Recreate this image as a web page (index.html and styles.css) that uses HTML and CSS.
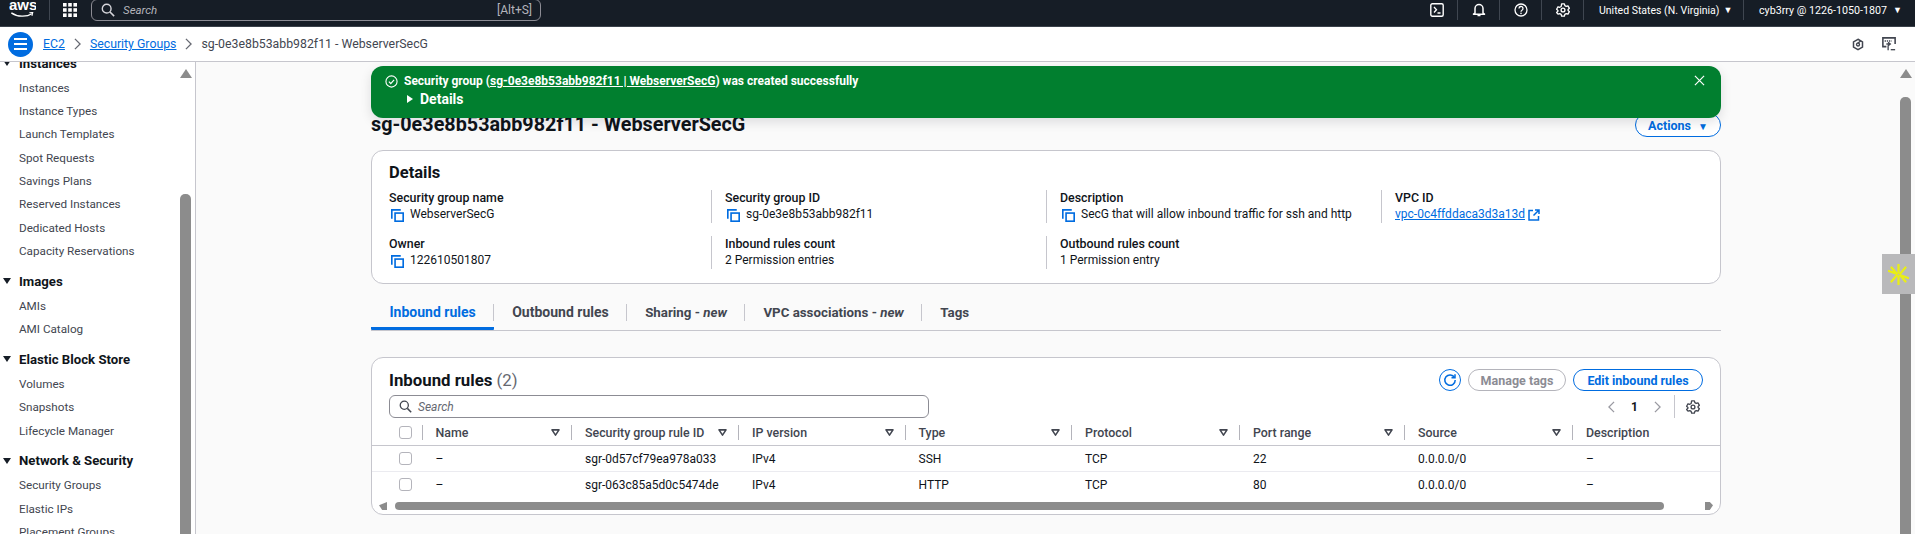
FILE: index.html
```html
<!DOCTYPE html>
<html lang="en">
<head>
  <meta charset="UTF-8">
  <title>Security Groups | EC2</title>
  <link rel="stylesheet" href="styles.css">
</head>
<body>

<svg class="sprite" xmlns="http://www.w3.org/2000/svg">
  <symbol id="i-copy" viewBox="0 0 16 16"><path d="M1 12V1h11" fill="none" stroke="currentColor" stroke-width="2"/><rect x="5" y="5" width="10" height="10" fill="none" stroke="currentColor" stroke-width="2"/></symbol>
  <symbol id="i-search" viewBox="0 0 16 16"><circle cx="6.5" cy="6.5" r="5" fill="none" stroke="currentColor" stroke-width="1.6"/><path d="M10.3 10.3 15 15" stroke="currentColor" stroke-width="1.8"/></symbol>
  <symbol id="i-gear" viewBox="0 0 16 16"><path d="M6.4 1h3.2l.5 2 1.6.9 2-.6 1.6 2.8-1.5 1.4v1l1.5 1.4-1.6 2.8-2-.6-1.6.9-.5 2H6.4l-.5-2-1.6-.9-2 .6L.7 10.9l1.5-1.4v-1L.7 7.1l1.6-2.8 2 .6 1.6-.9z" fill="none" stroke="currentColor" stroke-width="1.5" stroke-linejoin="round"/><circle cx="8" cy="8" r="2.2" fill="none" stroke="currentColor" stroke-width="1.5"/></symbol>
  <symbol id="i-sort" viewBox="0 0 10 8"><path d="M1 1h8L5 7z" fill="none" stroke="currentColor" stroke-width="1.8" stroke-linejoin="round"/></symbol>
  <symbol id="i-chev" viewBox="0 0 8 14"><path d="M1 1l6 6-6 6" fill="none" stroke="currentColor" stroke-width="1.5"/></symbol>
</svg>

<header class="topbar">
  <div class="aws-logo">
    <span class="aws-word">aws</span>
    <svg class="aws-smile" viewBox="0 0 28 7"><path d="M1 1c7 5 18 5 24 1" fill="none" stroke="#fff" stroke-width="1.5"/><path d="M22 1l4-.5-1 4" fill="none" stroke="#fff" stroke-width="1.2"/></svg>
  </div>
  <span class="top-divider"></span>
  <svg class="grid-icon" viewBox="0 0 14 14" fill="#fff"><rect width="3.6" height="3.6"/><rect x="5.2" width="3.6" height="3.6"/><rect x="10.4" width="3.6" height="3.6"/><rect y="5.2" width="3.6" height="3.6"/><rect x="5.2" y="5.2" width="3.6" height="3.6"/><rect x="10.4" y="5.2" width="3.6" height="3.6"/><rect y="10.4" width="3.6" height="3.6"/><rect x="5.2" y="10.4" width="3.6" height="3.6"/><rect x="10.4" y="10.4" width="3.6" height="3.6"/></svg>
  <div class="top-search">
    <svg class="icon-14"><use href="#i-search"/></svg>
    <span class="top-search-text">Search</span>
    <span class="top-search-key">[Alt+S]</span>
  </div>
  <div class="top-right">
    <div class="top-cell">
      <svg class="icon-14" viewBox="0 0 14 14"><rect x=".8" y=".8" width="12.4" height="12.4" rx="1.5" fill="none" stroke="#fff" stroke-width="1.4"/><path d="M4 4l2.5 2.8L4 9.5M7.5 10h3" fill="none" stroke="#fff" stroke-width="1.3"/></svg>
    </div>
    <div class="top-cell">
      <svg class="icon-14" viewBox="0 0 14 14"><path d="M3 10V5.500a4 4 0 0 1 8 0V10l1.500 1.200h-11z" fill="none" stroke="#fff" stroke-width="1.5" stroke-linejoin="round"/><path d="M5.5 12.5h3" stroke="#fff" stroke-width="1.5"/></svg>
    </div>
    <div class="top-cell">
      <svg class="icon-14" viewBox="0 0 14 14"><circle cx="7" cy="7" r="6" fill="none" stroke="#fff" stroke-width="1.3"/><path d="M5 5.500a2 2 0 1 1 3 1.700c-.7.4-1 .8-1 1.500" fill="none" stroke="#fff" stroke-width="1.3"/><rect x="6.3" y="9.7" width="1.4" height="1.4" fill="#fff"/></svg>
    </div>
    <div class="top-cell">
      <svg class="icon-14"><use href="#i-gear"/></svg>
    </div>
    <div class="top-cell top-region">United States (N. Virginia)<span class="caret">▼</span></div>
    <div class="top-cell top-user">cyb3rry @ 1226-1050-1807<span class="caret">▼</span></div>
  </div>
</header>

<div class="crumbbar">
  <button class="burger"><span></span><span></span><span></span></button>
  <a class="crumb-link crumb-first">EC2</a>
  <svg class="crumb-chev"><use href="#i-chev"/></svg>
  <a class="crumb-link">Security Groups</a>
  <svg class="crumb-chev"><use href="#i-chev"/></svg>
  <span class="crumb-now">sg-0e3e8b53abb982f11 - WebserverSecG</span>
  <div class="crumb-tools">
    <svg class="tool-hex" viewBox="0 0 16 16"><path d="M8 1l6 3.500v7L8 15l-6-3.500v-7z" fill="none" stroke="#424650" stroke-width="2"/><circle cx="8" cy="8" r="2" fill="none" stroke="#424650" stroke-width="1.8"/><path d="M8 6l4-3" stroke="#424650" stroke-width="1.8"/></svg>
    <svg class="tool-screen" viewBox="0 0 16 16"><path d="M5 11H1V1h14v7" fill="none" stroke="#424650" stroke-width="1.8"/><path d="M3 4.5h8" stroke="#424650" stroke-width="1.6" stroke-dasharray="1.5 1"/><path d="M5 8h4M7 6l2.500 2L7 10v5" fill="none" stroke="#424650" stroke-width="1.5"/><path d="M10 14.5h5" stroke="#424650" stroke-width="1.5"/></svg>
  </div>
</div>

<div class="layout">
  <nav class="sidenav">
    <div class="nav-list">
      <div class="nav-section nav-first">
        <div class="nav-head"><span class="nav-tri"></span>Instances</div>
        <a class="nav-item">Instances</a>
        <a class="nav-item">Instance Types</a>
        <a class="nav-item">Launch Templates</a>
        <a class="nav-item">Spot Requests</a>
        <a class="nav-item">Savings Plans</a>
        <a class="nav-item">Reserved Instances</a>
        <a class="nav-item">Dedicated Hosts</a>
        <a class="nav-item">Capacity Reservations</a>
      </div>
      <div class="nav-section">
        <div class="nav-head"><span class="nav-tri"></span>Images</div>
        <a class="nav-item">AMIs</a>
        <a class="nav-item">AMI Catalog</a>
      </div>
      <div class="nav-section">
        <div class="nav-head"><span class="nav-tri"></span>Elastic Block Store</div>
        <a class="nav-item">Volumes</a>
        <a class="nav-item">Snapshots</a>
        <a class="nav-item">Lifecycle Manager</a>
      </div>
      <div class="nav-section">
        <div class="nav-head"><span class="nav-tri"></span>Network &amp; Security</div>
        <a class="nav-item">Security Groups</a>
        <a class="nav-item">Elastic IPs</a>
        <a class="nav-item">Placement Groups</a>
      </div>
    </div>
    <div class="scroll-y scroll-nav"><span class="scroll-up"></span><span class="scroll-thumb"></span></div>
  </nav>

  <main class="main">
    <div class="content">
      <div class="flash">
        <svg class="flash-check" viewBox="0 0 14 14"><circle cx="7" cy="7" r="6" fill="none" stroke="#fff" stroke-width="1.2"/><path d="M4.2 7.200l2 2 3.600-4" fill="none" stroke="#fff" stroke-width="1.3"/></svg>
        <div class="flash-body">
          <div>Security group (<a class="flash-link">sg-0e3e8b53abb982f11 | WebserverSecG</a>) was created successfully</div>
          <div class="flash-details"><span class="flash-tri"></span>Details</div>
        </div>
        <svg class="flash-close" viewBox="0 0 12 12"><path d="M1 1l10 10M11 1L1 11" stroke="#fff" stroke-width="1.3"/></svg>
      </div>

      <div class="title-row">
        <h1 class="page-title">sg-0e3e8b53abb982f11 - WebserverSecG</h1>
        <button class="btn btn-actions">Actions <span class="btn-caret">▼</span></button>
      </div>

      <section class="card details-card">
        <h2 class="details-title">Details</h2>
        <div class="details-grid">
          <div class="field">
            <div class="field-label">Security group name</div>
            <div class="field-value"><svg class="copy"><use href="#i-copy"/></svg>WebserverSecG</div>
          </div>
          <div class="field">
            <div class="field-label">Security group ID</div>
            <div class="field-value"><svg class="copy"><use href="#i-copy"/></svg>sg-0e3e8b53abb982f11</div>
          </div>
          <div class="field">
            <div class="field-label">Description</div>
            <div class="field-value"><svg class="copy"><use href="#i-copy"/></svg>SecG that will allow inbound traffic for ssh and http</div>
          </div>
          <div class="field">
            <div class="field-label">VPC ID</div>
            <div class="field-value"><a class="vpc-link">vpc-0c4ffddaca3d3a13d</a>
              <svg class="ext" viewBox="0 0 12 12"><path d="M5 1.500H1v9.500h9.500V7M7 1h4v4M11 1L5.500 6.500" fill="none" stroke="#006ce0" stroke-width="1.5"/></svg>
            </div>
          </div>
          <div class="field">
            <div class="field-label">Owner</div>
            <div class="field-value"><svg class="copy"><use href="#i-copy"/></svg>122610501807</div>
          </div>
          <div class="field">
            <div class="field-label">Inbound rules count</div>
            <div class="field-value">2 Permission entries</div>
          </div>
          <div class="field">
            <div class="field-label">Outbound rules count</div>
            <div class="field-value">1 Permission entry</div>
          </div>
        </div>
      </section>

      <div class="tabs">
        <a class="tab tab-wide tab-active">Inbound rules</a>
        <a class="tab tab-wide">Outbound rules</a>
        <a class="tab">Sharing - <em>new</em></a>
        <a class="tab">VPC associations - <em>new</em></a>
        <a class="tab tab-last">Tags</a>
      </div>

      <section class="card rules-card">
        <div class="rules-head">
          <h2 class="rules-title">Inbound rules <span class="rules-count">(2)</span></h2>
          <button class="btn-refresh">
            <svg viewBox="0 0 14 14" class="icon-14"><path d="M11.500 4.500A5.200 5.200 0 1 0 12.200 7" fill="none" stroke="#006ce0" stroke-width="1.5"/><path d="M8.500 4.800h3.500V1.300" fill="none" stroke="#006ce0" stroke-width="1.5"/></svg>
          </button>
          <button class="btn btn-off">Manage tags</button>
          <button class="btn btn-edit">Edit inbound rules</button>
        </div>
        <div class="rules-tools">
          <div class="table-search">
            <svg class="icon-13"><use href="#i-search"/></svg>
            <span>Search</span>
          </div>
          <div class="pager">
            <svg class="pager-chev pager-prev"><use href="#i-chev"/></svg>
            <span class="pager-num">1</span>
            <svg class="pager-chev"><use href="#i-chev"/></svg>
            <span class="pager-gear"><svg class="icon-14"><use href="#i-gear"/></svg></span>
          </div>
        </div>
        <table class="rules-table">
          <thead>
            <tr>
              <th class="col-check"><div class="cell-check"><span class="checkbox"></span></div></th>
              <th class="col-name"><div class="th-in">Name<svg class="sort"><use href="#i-sort"/></svg></div></th>
              <th class="col-rule"><div class="th-in">Security group rule ID<svg class="sort"><use href="#i-sort"/></svg></div></th>
              <th class="col-ip"><div class="th-in">IP version<svg class="sort"><use href="#i-sort"/></svg></div></th>
              <th class="col-ip"><div class="th-in">Type<svg class="sort"><use href="#i-sort"/></svg></div></th>
              <th class="col-proto"><div class="th-in">Protocol<svg class="sort"><use href="#i-sort"/></svg></div></th>
              <th class="col-port"><div class="th-in">Port range<svg class="sort"><use href="#i-sort"/></svg></div></th>
              <th class="col-proto"><div class="th-in">Source<svg class="sort"><use href="#i-sort"/></svg></div></th>
              <th><div class="th-in">Description</div></th>
            </tr>
          </thead>
          <tbody>
            <tr>
              <td><div class="cell-check"><span class="checkbox"></span></div></td>
              <td>–</td><td>sgr-0d57cf79ea978a033</td><td>IPv4</td><td>SSH</td><td>TCP</td><td>22</td><td>0.0.0.0/0</td><td>–</td>
            </tr>
            <tr>
              <td><div class="cell-check"><span class="checkbox"></span></div></td>
              <td>–</td><td>sgr-063c85a5d0c5474de</td><td>IPv4</td><td>HTTP</td><td>TCP</td><td>80</td><td>0.0.0.0/0</td><td>–</td>
            </tr>
          </tbody>
        </table>
        <div class="scroll-x">
          <span class="scroll-left"></span>
          <span class="scroll-x-thumb"></span>
          <span class="scroll-right"></span>
        </div>
      </section>
    </div>
    <div class="scroll-y scroll-main"><span class="scroll-up"></span><span class="scroll-thumb scroll-thumb-main"></span></div>
    <div class="side-widget">
      <svg viewBox="0 0 24 24" class="widget-star"><path d="M12 1v9M12 14v9M1 8l8.500 3M14.500 13l8.500 3M4 20l6-7M14 11l6-7M4 4l6 7M14 13l6 7" stroke="#e9ee16" stroke-width="2.6" stroke-linecap="round"/></svg>
    </div>
  </main>
</div>

</body>
</html>
```

FILE: styles.css
```css
html, body {
  margin: 0;
  padding: 0;
  height: 534px;
  overflow: hidden;
}

body {
  font-family: Roboto, "Noto Sans", sans-serif;
  font-size: 12px;
  color: #0f141a;
  background: #fafafa;
}

a {
  color: inherit;
}

button {
  font-family: inherit;
  cursor: pointer;
}

.sprite {
  display: none;
}

.icon-13 {
  width: 13px;
  height: 13px;
}

.icon-14 {
  width: 14px;
  height: 14px;
}

/* top bar */
.topbar {
  display: flex;
  align-items: flex-start;
  height: 27px;
  box-sizing: border-box;
  background: #161d26;
  border-bottom: 1px solid #3a414a;
  color: #fff;
}

.aws-logo {
  width: 27px;
  height: 20px;
  margin-left: 9px;
  overflow: hidden;
  flex: none;
}

.aws-word {
  display: block;
  font-family: "Liberation Sans", sans-serif;
  font-weight: bold;
  font-size: 15px;
  line-height: 14px;
  margin-top: -2px;
}

.aws-smile {
  display: block;
  width: 27px;
  height: 6px;
}

.top-divider {
  width: 1px;
  height: 20px;
  margin-left: 13px;
  background: #3f4650;
  flex: none;
}

.grid-icon {
  width: 14px;
  height: 14px;
  margin: 3px 0 0 13px;
  flex: none;
}

.top-search {
  display: flex;
  align-items: center;
  width: 450px;
  height: 22px;
  box-sizing: border-box;
  margin: -1px 0 0 14px;
  padding: 0 8px 0 9px;
  border: 1px solid #8c8c94;
  border-radius: 6px;
  color: #b4b4bb;
  flex: none;
}

.top-search .icon-14 {
  color: #d5d5da;
  margin-right: 8px;
}

.top-search-text {
  font-style: italic;
  font-size: 11.5px;
}

.top-search-key {
  margin-left: auto;
}

.top-right {
  display: flex;
  margin-left: auto;
}

.top-cell {
  display: flex;
  align-items: center;
  justify-content: center;
  width: 42px;
  height: 20px;
  box-sizing: border-box;
  border-right: 1px solid #3f4650;
}

.top-region,
.top-user {
  justify-content: flex-start;
  padding-left: 15px;
  white-space: pre;
}

.top-region {
  width: 160px;
  font-size: 10.5px;
}

.top-user {
  width: 171px;
  font-size: 10.7px;
  border-right: 0;
}

.caret {
  font-size: 9px;
  margin-left: 6px;
}

.top-region .caret {
  margin-left: 4px;
}

/* breadcrumb */
.crumbbar {
  display: flex;
  align-items: center;
  height: 35px;
  box-sizing: border-box;
  background: #fff;
  border-bottom: 1px solid #c6c6cd;
  font-size: 12.3px;
  padding-left: 8px;
}

.burger {
  display: flex;
  flex-direction: column;
  align-items: center;
  justify-content: center;
  gap: 3px;
  width: 25px;
  height: 25px;
  padding: 0;
  border: 0;
  border-radius: 50%;
  background: #006ce0;
}

.burger span {
  display: block;
  width: 13px;
  height: 2px;
  background: #fff;
}

.crumb-first {
  margin-left: 10px;
}

.crumb-link {
  color: #006ce0;
  text-decoration: underline;
}

.crumb-chev {
  width: 7px;
  height: 12px;
  margin: 0 9px;
  color: #656871;
}

.crumb-now {
  color: #424650;
}

.crumb-tools {
  display: flex;
  align-items: center;
  gap: 18px;
  margin-left: auto;
  margin-right: 19px;
}

.tool-hex {
  width: 12px;
  height: 13px;
}

.tool-screen {
  width: 14px;
  height: 14px;
}

/* layout */
.layout {
  display: flex;
  height: 472px;
}

.sidenav {
  display: flex;
  width: 196px;
  height: 100%;
  box-sizing: border-box;
  overflow: hidden;
  background: #fff;
  border-right: 1px solid #c6c6cd;
  flex: none;
}

.nav-list {
  flex: 1;
  margin-top: -12px;
}

.nav-section {
  margin-top: 5.5px;
}

.nav-first {
  margin-top: 0;
}

.nav-head {
  display: flex;
  align-items: center;
  height: 26px;
  font-weight: 700;
  font-size: 13.2px;
}

.nav-tri {
  width: 0;
  height: 0;
  margin: 0 8px 0 3px;
  border-left: 4px solid transparent;
  border-right: 4px solid transparent;
  border-top: 6px solid #161d26;
}

.nav-item {
  display: flex;
  align-items: center;
  height: 23.33px;
  padding-left: 19px;
  font-size: 11.7px;
  color: #424650;
}

.scroll-y {
  display: flex;
  flex-direction: column;
  align-items: center;
  width: 11px;
  flex: none;
}

.scroll-nav {
  margin-right: 4px;
}

.scroll-up {
  width: 0;
  height: 0;
  margin-top: 7px;
  border-left: 6px solid transparent;
  border-right: 6px solid transparent;
  border-bottom: 9px solid #8c8c8c;
}

.scroll-thumb {
  width: 11px;
  flex: 1;
  margin-top: 116px;
  border-radius: 5px 5px 0 0;
  background: #8c8c8c;
}

.scroll-thumb-main {
  margin-top: 19px;
}

/* main */
.main {
  flex: 1;
  display: flex;
  position: relative;
  min-width: 0;
  background: #fafafa;
}

.content {
  position: relative;
  width: 1350px;
  margin-left: 175px;
  flex: none;
}

.scroll-main {
  margin-left: auto;
  margin-right: 4px;
}

.side-widget {
  position: absolute;
  right: 0;
  top: 192px;
  width: 33px;
  height: 40px;
  display: flex;
  align-items: center;
  justify-content: center;
  background: #b9b9bb;
}

.widget-star {
  width: 21px;
  height: 21px;
}

.flash {
  position: absolute;
  left: 0;
  right: 0;
  top: 4px;
  height: 52px;
  box-sizing: border-box;
  display: flex;
  padding: 7px 0 0 14px;
  background: #017f2f;
  border-radius: 12px;
  color: #fff;
  font-weight: 700;
  font-size: 12px;
  line-height: 16px;
  box-shadow: 0 4px 12px rgba(0, 7, 22, 0.12);
  z-index: 2;
}

.flash-check {
  width: 13px;
  height: 13px;
  margin: 2px 6px 0 0;
  flex: none;
}

.flash-link {
  text-decoration: underline;
}

.flash-details {
  display: flex;
  align-items: center;
  margin-top: 2px;
  font-size: 14px;
}

.flash-tri {
  width: 0;
  height: 0;
  margin: 0 7px 0 3px;
  border-top: 4.5px solid transparent;
  border-bottom: 4.5px solid transparent;
  border-left: 6px solid #fff;
}

.flash-close {
  width: 11px;
  height: 11px;
  margin: 2px 16px 0 auto;
}

.title-row {
  display: flex;
  align-items: flex-end;
  justify-content: space-between;
  height: 88px;
  padding-bottom: 12px;
  box-sizing: border-box;
}

.page-title {
  margin: 0;
  font-size: 19.8px;
  line-height: 26px;
  font-weight: 700;
}

.btn {
  height: 22px;
  padding: 0;
  border-radius: 12px;
  background: #fff;
  font-weight: 700;
  font-size: 12.5px;
}

.btn-actions {
  width: 86px;
  height: 24px;
  margin-bottom: 1px;
  border: 1.5px solid #006ce0;
  color: #006ce0;
}

.btn-caret {
  font-size: 10px;
  margin-left: 4px;
}

.card {
  box-sizing: border-box;
  background: #fff;
  border: 1px solid #c6c6cd;
  border-radius: 12px;
}

.details-card {
  height: 134px;
  padding: 12px 17px 0;
}

.details-title {
  margin: 0;
  font-size: 16.5px;
  line-height: 20px;
  font-weight: 700;
}

.details-grid {
  display: grid;
  grid-template-columns: 322px 335px 335px 1fr;
  row-gap: 13px;
  margin-top: 7px;
}

.field {
  height: 33px;
  box-sizing: border-box;
  padding-left: 13px;
  border-left: 1px solid #c6c6cd;
}

.field:nth-child(4n + 1) {
  padding-left: 0;
  border-left: 0;
}

.field-label {
  font-weight: 500;
  font-size: 12.4px;
  line-height: 16px;
}

.field-value {
  display: flex;
  align-items: center;
  height: 17px;
  line-height: 17px;
  white-space: pre;
}

.copy {
  width: 13px;
  height: 13px;
  margin: 1px 6px 0 2px;
  color: #006ce0;
  flex: none;
}

.vpc-link {
  color: #006ce0;
  text-decoration: underline;
}

.ext {
  width: 12px;
  height: 12px;
  margin-left: 3px;
}

.tabs {
  display: flex;
  align-items: flex-end;
  height: 47px;
  box-sizing: border-box;
  border-bottom: 1px solid #c6c6cd;
}

.tab {
  position: relative;
  height: 26px;
  box-sizing: border-box;
  padding: 0 18px 0 18.5px;
  font-weight: 700;
  font-size: 13.3px;
  color: #424650;
  line-height: 17px;
  white-space: pre;
}

.tab-wide {
  font-size: 14px;
}

.tab::after {
  content: "";
  position: absolute;
  right: 0;
  top: 0;
  width: 1px;
  height: 17px;
  background: #c6c6cd;
}

.tab-last::after {
  display: none;
}

.tab em {
  font-style: italic;
}

.tab-active {
  color: #006ce0;
  border-bottom: 3px solid #006ce0;
  border-radius: 1px;
}

.rules-card {
  height: 158px;
  margin-top: 26px;
  padding-top: 11px;
  overflow: hidden;
}

.rules-head {
  display: flex;
  align-items: center;
  height: 22px;
  padding: 0 17px;
}

.rules-title {
  margin: 0 auto 0 0;
  font-size: 16.8px;
  font-weight: 700;
}

.rules-count {
  font-weight: 400;
  color: #656871;
}

.btn-refresh {
  display: flex;
  align-items: center;
  justify-content: center;
  width: 22px;
  height: 22px;
  padding: 0;
  margin-right: 7px;
  border: 1.5px solid #006ce0;
  border-radius: 50%;
  background: #fff;
}

.btn-off {
  width: 98px;
  margin-right: 7px;
  border: 1px solid #b4b4bb;
  color: #8c8c94;
}

.btn-edit {
  width: 130px;
  border: 1.5px solid #006ce0;
  color: #006ce0;
}

.rules-tools {
  display: flex;
  align-items: center;
  height: 23px;
  margin-top: 4px;
  padding-left: 17px;
}

.table-search {
  display: flex;
  align-items: center;
  width: 540px;
  height: 23px;
  box-sizing: border-box;
  padding-left: 9px;
  border: 1px solid #8c8c94;
  border-radius: 6px;
  font-style: italic;
  color: #656871;
}

.table-search span {
  margin-left: 6px;
}

.table-search .icon-13 {
  color: #424650;
}

.pager {
  display: flex;
  align-items: center;
  margin-left: auto;
  margin-right: 20px;
}

.pager-chev {
  width: 7px;
  height: 12px;
  color: #9a9aa2;
}

.pager-prev {
  transform: scaleX(-1);
}

.pager-num {
  width: 39px;
  text-align: center;
  font-weight: 700;
}

.pager-gear {
  display: flex;
  align-items: center;
  height: 23px;
  margin-left: 13px;
  padding-left: 11px;
  border-left: 1px solid #c6c6cd;
  color: #424650;
}

.rules-table {
  width: 100%;
  margin-top: 2px;
  border-collapse: collapse;
  table-layout: fixed;
}

.col-check {
  width: 49.5px;
}

.col-name {
  width: 149.5px;
}

.col-rule {
  width: 167px;
}

.col-ip {
  width: 166.5px;
}

.col-proto {
  width: 168px;
}

.col-port {
  width: 165px;
}

.rules-table th {
  height: 25px;
  padding: 0;
  text-align: left;
  font-weight: 500;
  font-size: 12.4px;
  color: #424650;
  border-bottom: 1px solid #c6c6cd;
}

.th-in {
  display: flex;
  align-items: center;
  justify-content: space-between;
  height: 15px;
  padding: 0 11px 0 13px;
  border-left: 1px solid #b4b4bb;
}

.sort {
  width: 9px;
  height: 7px;
  color: #424650;
}

.rules-table td {
  height: 25px;
  padding: 0 0 0 14px;
  border-bottom: 1px solid #ebebf0;
}

.rules-table td:first-child {
  padding: 0;
}

.rules-table tr:last-child td {
  border-bottom: 0;
}

.cell-check {
  display: flex;
  padding-left: 27px;
}

.checkbox {
  width: 13px;
  height: 13px;
  box-sizing: border-box;
  border: 1px solid #b4b4bb;
  border-radius: 3px;
  background: #fff;
}

.scroll-x {
  display: flex;
  align-items: center;
  height: 8px;
  margin-top: 5px;
  padding: 0 7px;
}

.scroll-left {
  width: 8px;
  height: 8px;
  background: #8c8c8c;
  clip-path: polygon(100% 0, 100% 100%, 40% 100%, 0 40%);
}

.scroll-x-thumb {
  width: 1269px;
  height: 8px;
  margin-left: 8px;
  border-radius: 4px;
  background: #8c8c8c;
}

.scroll-right {
  width: 8px;
  height: 8px;
  margin-left: auto;
  background: #8c8c8c;
  clip-path: polygon(0 0, 60% 0, 100% 40%, 60% 100%, 0 100%);
}
```
